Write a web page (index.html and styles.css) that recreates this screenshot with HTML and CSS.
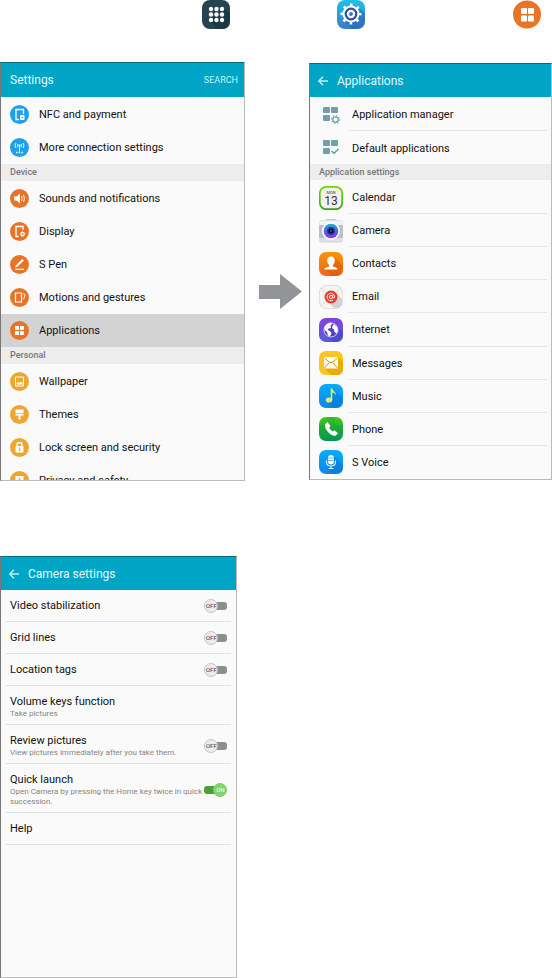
FILE: index.html
```html
<!DOCTYPE html>
<html lang="en">
<head>
  <meta charset="UTF-8">
  <meta name="viewport" content="width=device-width, initial-scale=1.0">
  <title>Camera settings</title>
  <link rel="stylesheet" href="styles.css">
</head>
<body>
  <div class="path">
    <svg class="path-icon" viewBox="0 0 28 29">
      <rect width="28" height="29" rx="8" fill="#234450"/>
      <path d="M7 20 L22 8 L28 14 V21 Q28 29 20 29 H15Z" fill="#1b3843"/>
      <g fill="#fff">
        <circle cx="9" cy="9" r="2.200"/><circle cx="14.500" cy="9" r="2.200"/><circle cx="20" cy="9" r="2.200"/>
        <circle cx="9" cy="14.500" r="2.200"/><circle cx="14.500" cy="14.500" r="2.200"/><circle cx="20" cy="14.500" r="2.200"/>
        <circle cx="9" cy="20" r="2.200"/><circle cx="14.500" cy="20" r="2.200"/><circle cx="20" cy="20" r="2.200"/>
      </g>
    </svg>
    <svg class="path-icon" viewBox="0 0 28 29">
      <defs><linearGradient id="gSet" x2="0" y2="1"><stop offset="0" stop-color="#1cc3e8"/><stop offset="1" stop-color="#4179c4"/></linearGradient></defs>
      <rect width="28" height="29" rx="8" fill="url(#gSet)"/>
      <path d="M7 20 L21 7 L28 14 V21 Q28 29 20 29 H15Z" fill="#1e62b4" opacity=".5"/>
      <circle cx="14" cy="14" r="8.500" fill="#fff"/>
      <circle cx="14" cy="14" r="9.300" fill="none" stroke="#fff" stroke-width="2.400" stroke-dasharray="2.600 4.704" stroke-dashoffset="1.300"/>
      <circle cx="14" cy="14" r="5.300" fill="#fff" stroke="#2c4fae" stroke-width="2.200"/>
      <circle cx="14" cy="14" r="1.900" fill="#2a78c8"/>
    </svg>
    <svg class="path-icon" viewBox="0 0 28 29">
      <circle cx="14" cy="14.500" r="14" fill="#e97428"/>
      <g fill="#fff"><rect x="8" y="8" width="6" height="6" rx="1"/><rect x="15" y="8" width="6" height="6" rx="1"/><rect x="8" y="15.500" width="6" height="6" rx="1"/><rect x="15" y="15.500" width="6" height="6" rx="1"/></g>
    </svg>
  </div>

  <div class="steps">
    <section class="screen settings">
      <header class="bar">
        <h2>Settings</h2>
        <button type="button" class="search">SEARCH</button>
      </header>
      <nav class="group">
        <a class="item" href="#nfc">
          <svg class="badge blue" viewBox="0 0 19 19"><path d="M9 14.500H6V4.500h7.500V9" fill="none" stroke="#fff" stroke-width="1.300"/><rect x="10" y="10" width="4.500" height="5" rx=".8" fill="#fff"/><path d="M11.500 12.500h1.500" stroke="#1fa0ec"/></svg>
          NFC and payment
        </a>
        <a class="item" href="#connections">
          <svg class="badge blue" viewBox="0 0 19 19"><g fill="none" stroke="#fff" stroke-width=".9"><path d="M6 5q-2 2.500 0 5M8 6q-1 1.500 0 3M13 5q2 2.500 0 5M11 6q1 1.500 0 3M9.500 7v6.500"/><path d="M6 14.500h7" stroke-width="1.300" stroke-dasharray="1.500 1.200"/></g><circle cx="9.500" cy="7.500" r="1" fill="#fff"/></svg>
          More connection settings
        </a>
      </nav>
      <h3 class="heading">Device</h3>
      <nav class="group">
        <a class="item" href="#sounds">
          <svg class="badge orange" viewBox="0 0 19 19"><path d="M4 7.500h2.500L10 4.500v10L6.500 11.500H4z" fill="#fff"/><path d="M11.500 7q1.500 2.500 0 5M13.500 6q2 3.500 0 7" fill="none" stroke="#fff" stroke-width=".9"/></svg>
          Sounds and notifications
        </a>
        <a class="item" href="#display">
          <svg class="badge orange" viewBox="0 0 19 19"><path d="M8.500 14.500H6V4.500h7V8" fill="none" stroke="#fff" stroke-width="1.300"/><circle cx="12.500" cy="12" r="2.200" fill="#fff" stroke="#fff" stroke-dasharray="1 .8"/><circle cx="12.800" cy="12" r=".9" fill="#e97428"/></svg>
          Display
        </a>
        <a class="item" href="#spen">
          <svg class="badge orange" viewBox="0 0 19 19"><path d="M5.500 14.300h8.500" stroke="#fff" stroke-width="1.300"/><path d="M5 12.500l.8-2L12.300 4l1.500 1.500-6.300 6.200z" fill="#fff"/></svg>
          S Pen
        </a>
        <a class="item" href="#motions">
          <svg class="badge orange" viewBox="0 0 19 19"><path d="M5.500 5h6v9h-6z" fill="none" stroke="#fff" stroke-width="1.200"/><path d="M13 5.500l2 1-.8 3.500-1.200 1.500" fill="none" stroke="#fff" stroke-width=".9"/></svg>
          Motions and gestures
        </a>
        <a class="item selected" href="#applications">
          <svg class="badge orange" viewBox="0 0 19 19"><g fill="#fff"><rect x="5" y="5" width="4" height="4" rx=".5"/><rect x="10" y="5" width="4" height="4" rx=".5"/><rect x="5" y="10" width="4" height="4" rx=".5"/><rect x="10" y="10" width="4" height="4" rx=".5"/></g></svg>
          Applications
        </a>
      </nav>
      <h3 class="heading">Personal</h3>
      <nav class="group">
        <a class="item" href="#wallpaper">
          <svg class="badge amber" viewBox="0 0 19 19"><path d="M5.500 5h8v9h-8z" fill="none" stroke="#fff"/><path d="M6.500 12.500v-1.300l1.700-1 1.300.8 1.500-1.500 1.500 1.500v1.500z" fill="#fff"/></svg>
          Wallpaper
        </a>
        <a class="item" href="#themes">
          <svg class="badge amber" viewBox="0 0 19 19"><path d="M5.500 4.500h8V8h-8zM5.500 8.800h8v1.700h-3v4h-2v-4h-3z" fill="#fff"/></svg>
          Themes
        </a>
        <a class="item" href="#lock">
          <svg class="badge amber" viewBox="0 0 19 19"><path d="M7 8.500V7a2.500 2.500 0 0 1 5 0v1.500" fill="none" stroke="#fff" stroke-width="1.300"/><rect x="5.500" y="8" width="8" height="6.500" rx=".8" fill="#fff"/><path d="M9.500 9.500v3.500" stroke="#eda632" stroke-width="1.400"/></svg>
          Lock screen and security
        </a>
        <a class="item" href="#privacy">
          <svg class="badge amber" viewBox="0 0 19 19"><path d="M5.500 5h8v6.500l-4 3-4-3z" fill="#fff"/><path d="M9.500 6.500v4" stroke="#eda632" stroke-width="1.400"/></svg>
          Privacy and safety
        </a>
      </nav>
    </section>

    <svg class="arrow" viewBox="0 0 43 35"><path d="M0 11h21V0l22 17.500L21 35V25H0z" fill="#939498"/></svg>

    <section class="screen applications">
      <header class="bar">
        <a class="back" href="#settings" aria-label="Back"><svg viewBox="0 0 10 10"><path d="M10 5H1M5 .8L.8 5 5 9.200" fill="none" stroke="#b5f4fb" stroke-width="1.400"/></svg></a>
        <h2>Applications</h2>
      </header>
      <nav class="group managers">
        <a class="app" href="#manager">
          <svg class="app-icon" viewBox="0 0 24 24"><g fill="#70a1a9"><rect x="4" y="4" width="7" height="6" rx="1"/><rect x="12" y="4" width="7" height="6" rx="1"/><rect x="4" y="12" width="7" height="6" rx="1"/></g><circle cx="16.500" cy="16.500" r="2.700" fill="none" stroke="#70a1a9" stroke-width="1.300"/><circle cx="16.500" cy="16.500" r="4" fill="none" stroke="#70a1a9" stroke-width="1.200" stroke-dasharray="1.200 1.942"/></svg>
          <span class="name">Application manager</span>
        </a>
        <a class="app" href="#defaults">
          <svg class="app-icon" viewBox="0 0 24 24"><g fill="#70a1a9"><rect x="4" y="4" width="7" height="6" rx="1"/><rect x="12" y="4" width="7" height="6" rx="1"/><rect x="4" y="12" width="7" height="6" rx="1"/></g><path d="M12.500 15l2.500 2.300 4.500-4.300" fill="none" stroke="#70a1a9" stroke-width="1.600"/></svg>
          <span class="name">Default applications</span>
        </a>
      </nav>
      <h3 class="heading">Application settings</h3>
      <nav class="group apps">
        <a class="app" href="#calendar">
          <svg class="app-icon" viewBox="0 0 24 24"><defs><linearGradient id="gCal" x2="0" y2="1"><stop offset="0" stop-color="#6ddb00"/><stop offset="1" stop-color="#35a51b"/></linearGradient></defs><rect x=".8" y=".8" width="22.400" height="22.400" rx="6.500" fill="#f2f3ef" stroke="url(#gCal)" stroke-width="1.700"/><text x="12" y="7.500" font-size="4" text-anchor="middle" fill="#333">MON</text><text x="12" y="18.500" font-size="12" text-anchor="middle" fill="#333">13</text></svg>
          <span class="name">Calendar</span>
        </a>
        <a class="app" href="#camera">
          <svg class="app-icon" viewBox="0 0 24 24"><defs><linearGradient id="gCam" x2="0" y2="1"><stop offset="0" stop-color="#12b5cf"/><stop offset=".5" stop-color="#4867e8"/><stop offset="1" stop-color="#a12bf1"/></linearGradient></defs><rect x="7" y="0" width="10" height="3" rx="1" fill="#c7c7cb"/><rect x=".5" y="1.500" width="23" height="22" rx="2" fill="#f2f2f5" stroke="#dcdce0" stroke-width=".7"/><rect y="6" width="24" height="13" fill="#bdbdcb"/><rect x=".5" y="19" width="23" height="4" fill="#dedee9"/><circle cx="12" cy="12" r="9" fill="#fff"/><circle cx="12" cy="12" r="7.300" fill="url(#gCam)"/><circle cx="12" cy="12" r="4" fill="#33339c"/><circle cx="12" cy="12" r="2.500" fill="#090e3b"/><circle cx="12" cy="12" r=".8" fill="#39a6c9"/></svg>
          <span class="name">Camera</span>
        </a>
        <a class="app" href="#contacts">
          <svg class="app-icon" viewBox="0 0 24 24"><defs><linearGradient id="gCon" x2="0" y2="1"><stop offset="0" stop-color="#f99408"/><stop offset="1" stop-color="#eb6621"/></linearGradient></defs><rect width="24" height="24" rx="7" fill="url(#gCon)"/><path d="M15 5l9 9v4q0 6-6 6h-5l-7-7z" fill="#d75a0d" opacity=".5"/><path d="M12 4.500c2.700 0 4 2 3.800 4.500-.2 2-1 3-1.800 4v1.500c1.500.8 4.500.7 4.500 3H5.500c0-2.300 3-2.200 4.500-3V13c-.8-1-1.600-2-1.800-4C8 6.500 9.300 4.500 12 4.500z" fill="#fff"/></svg>
          <span class="name">Contacts</span>
        </a>
        <a class="app" href="#email">
          <svg class="app-icon" viewBox="0 0 24 24"><rect x=".4" y=".4" width="23.200" height="23.200" rx="7" fill="#f4f4f1" stroke="#d6d6d2" stroke-width=".8"/><path d="M2 3l10 9L22 3M2 21l6-6M22 21l-6-6" fill="none" stroke="#d1d1ce" stroke-width=".8"/><path d="M17 8l6 6v4q0 5-5 5h-3l-7-7z" fill="#d3d3d0"/><circle cx="12" cy="12" r="6.500" fill="#ec3c28"/><circle cx="12" cy="12" r="1.600" fill="none" stroke="#fff"/><path d="M13.700 10v2.500q1.500 1.500 2-.5a3.800 3.800 0 1 0-1.700 3.200" fill="none" stroke="#fff" stroke-width=".9"/></svg>
          <span class="name">Email</span>
        </a>
        <a class="app" href="#internet">
          <svg class="app-icon" viewBox="0 0 24 24"><defs><linearGradient id="gInt" x2="0" y2="1"><stop offset="0" stop-color="#8440dc"/><stop offset="1" stop-color="#5361da"/></linearGradient></defs><rect width="24" height="24" rx="7" fill="url(#gInt)"/><path d="M17 7l7 7v4q0 6-6 6h-4l-7-7z" fill="#4636b6" opacity=".5"/><circle cx="12" cy="12" r="7" fill="#5240c9" stroke="#f4f1ff" stroke-width=".8"/><path d="M5.500 9l2.500-3 4-1.500 1 1.500-1.500 2 .5 2-2.500.5-1 1.500 2.500 1 1.500 2-1.500 3.500-2-1L8 14 5.500 12zM15 6l3 3 .8 3-1.300 3.500L15.500 14l-.5-2.500-2-1.500.5-2z" fill="#fff"/></svg>
          <span class="name">Internet</span>
        </a>
        <a class="app" href="#messages">
          <svg class="app-icon" viewBox="0 0 24 24"><rect width="24" height="24" rx="7" fill="#fdc51e"/><path d="M19 6l5 5v7q0 6-6 6h-6l-7-7z" fill="#e5a500" opacity=".8"/><rect x="5" y="6" width="14" height="11.500" rx=".5" fill="#fffdf3"/><path d="M5.500 7l4.500 4q2 1.500 4 0l4.500-4M5.500 17l4.500-5M18.500 17L14 12" fill="none" stroke="#cc9716"/></svg>
          <span class="name">Messages</span>
        </a>
        <a class="app" href="#music">
          <svg class="app-icon" viewBox="0 0 24 24"><defs><linearGradient id="gBlue" x2="0" y2="1"><stop offset="0" stop-color="#04adfa"/><stop offset="1" stop-color="#1185e8"/></linearGradient></defs><rect width="24" height="24" rx="7" fill="url(#gBlue)"/><path d="M14 5l10 9v4q0 6-6 6h-4l-6-6z" fill="#0875d0" opacity=".5"/><ellipse cx="10" cy="16" rx="3.200" ry="2.600" fill="#d8f36b"/><path d="M11.700 16V4.500h1.600c.2 2.500 4 3 3.700 7-.8-2-2-2.700-3.700-3V16z" fill="#d8f36b"/></svg>
          <span class="name">Music</span>
        </a>
        <a class="app" href="#phone">
          <svg class="app-icon" viewBox="0 0 24 24"><defs><linearGradient id="gPho" x2="0" y2="1"><stop offset="0" stop-color="#43c91b"/><stop offset="1" stop-color="#009654"/></linearGradient></defs><rect width="24" height="24" rx="7" fill="url(#gPho)"/><path d="M8 0h8v8h8v8h-8v8H8v-8H0V8h8z" fill="#068b40" opacity=".18"/><path d="M6 7.500L8.500 5l3 4-1.500 2 3.500 3.500 2-1.300 3.500 3-2.500 2.500C12 19.500 5.500 13 6 7.500z" fill="#fff"/></svg>
          <span class="name">Phone</span>
        </a>
        <a class="app" href="#svoice">
          <svg class="app-icon" viewBox="0 0 24 24"><rect width="24" height="24" rx="7" fill="url(#gBlue)"/><path d="M15 6l9 9v3q0 6-6 6h-5l-5-6z" fill="#0875d0" opacity=".5"/><rect x="9" y="5" width="6" height="9.500" rx="3" fill="#f1faff"/><path d="M9 8h6M9 10.500h6" stroke="#53a9d8" stroke-width=".8"/><path d="M7.500 10.500v1.500q0 4 4.500 4t4.500-4v-1.500M12 16v2.500M9.500 18.500h5" fill="none" stroke="#e3f5ff" stroke-width="1.100"/></svg>
          <span class="name">S Voice</span>
        </a>
      </nav>
    </section>
  </div>

  <section class="screen camera">
    <header class="bar">
      <a class="back" href="#applications" aria-label="Back"><svg viewBox="0 0 10 10"><path d="M10 5H1M5 .8L.8 5 5 9.200" fill="none" stroke="#b5f4fb" stroke-width="1.400"/></svg></a>
      <h2>Camera settings</h2>
    </header>
    <label class="option">
      <span class="text">Video stabilization</span>
      <span class="switch"><input type="checkbox"><span class="knob">OFF</span></span>
    </label>
    <label class="option">
      <span class="text">Grid lines</span>
      <span class="switch"><input type="checkbox"><span class="knob">OFF</span></span>
    </label>
    <label class="option">
      <span class="text">Location tags</span>
      <span class="switch"><input type="checkbox"><span class="knob">OFF</span></span>
    </label>
    <a class="option detailed" href="#volume">
      <span class="text">Volume keys function<small>Take pictures</small></span>
    </a>
    <label class="option detailed">
      <span class="text">Review pictures<small>View pictures immediately after you take them.</small></span>
      <span class="switch"><input type="checkbox"><span class="knob">OFF</span></span>
    </label>
    <label class="option detailed">
      <span class="text">Quick launch<small>Open Camera by pressing the Home key twice in quick succession.</small></span>
      <span class="switch on"><input type="checkbox" checked><span class="knob">ON</span></span>
    </label>
    <a class="option" href="#help">
      <span class="text">Help</span>
    </a>
  </section>
</body>
</html>
```
FILE: styles.css
```css
* {
  box-sizing: border-box;
}

body {
  margin: 0;
  background: #fff;
  color: #111;
  font-family: Roboto, "Liberation Sans", sans-serif;
  font-size: 11px;
  line-height: 14px;
}

a {
  color: inherit;
  text-decoration: none;
}

svg {
  display: block;
}

h2, h3 {
  margin: 0;
}

/* icon row above the screens */
.path {
  display: grid;
  grid-template-columns: 135fr 176fr 39fr;
  padding-left: 36.6%;
  margin-bottom: 33px;
}

.path-icon {
  width: 28px;
  height: 29px;
}

.steps {
  display: grid;
  grid-template-columns: 245fr 64fr 243fr;
  align-items: center;
  margin-bottom: 75px;
}

.arrow {
  width: 43px;
  margin: 40px auto 0 14px;
}

.screen {
  display: flex;
  flex-direction: column;
  overflow: hidden;
  background: #fafafa;
  border: 1px solid #bbb;
  border-left-color: #777;
  border-top-color: #046e83;
}

.settings {
  height: 419px;
}

.applications {
  min-height: 417px;
}

.camera {
  width: 43%;
  min-height: 422px;
}

.bar {
  display: flex;
  flex: none;
  align-items: center;
  height: 34px;
  padding: 0 6px 0 9px;
  background: #00a5c6;
  color: #e2fafd;
}

.applications .bar, .camera .bar {
  height: 33px;
  padding-left: 8px;
}

.bar h2 {
  font-size: 12px;
  font-weight: 400;
}

.back {
  width: 10px;
  margin-right: 9px;
}

.search {
  margin-left: auto;
  padding: 0;
  border: 0;
  background: none;
  color: #c8f4fa;
  font: inherit;
  font-size: 9px;
}

.heading {
  flex: none;
  padding-left: 9px;
  background: #ededed;
  color: #777;
  font-size: 9px;
  font-weight: 500;
  line-height: 17px;
}

.applications .heading {
  line-height: 16px;
}

.group {
  flex: none;
  padding-top: 1px;
}

.item {
  display: flex;
  align-items: center;
  gap: 10px;
  height: 33px;
  padding-left: 9px;
}

.item.selected {
  background: #d3d3d3;
}

.badge {
  width: 19px;
  height: 19px;
  border-radius: 50%;
}

.blue {
  background: #1fa0ec;
}

.orange {
  background: #e97428;
}

.amber {
  background: #eda632;
}

/* applications list */
.managers, .apps {
  display: flex;
  flex-direction: column;
}

.apps {
  flex: 1;
}

.app {
  display: flex;
  flex: 1 0 33px;
  align-items: center;
  gap: 5px;
  padding: 0 4px 0 9px;
}

.app-icon {
  flex: none;
  width: 24px;
  height: 24px;
}

.name {
  display: flex;
  flex: 1;
  align-self: stretch;
  align-items: center;
  padding: 2px 0 0 4px;
  border-bottom: 1px solid #e6e6e6;
}

.app:last-child .name {
  border-bottom: 0;
}

/* camera settings */
.option {
  display: flex;
  align-items: center;
  justify-content: space-between;
  min-height: 32px;
  margin: 0 5px;
  padding: 5px 4px;
  border-bottom: 1px solid #e2e2e2;
}

.option.detailed {
  padding: 9px 4px 5px;
}

.option small {
  display: block;
  color: #858585;
  font-size: 8px;
  line-height: 10px;
}

.switch {
  position: relative;
  flex: none;
  width: 23px;
  height: 14px;
}

.switch input {
  display: block;
  width: 17px;
  height: 8px;
  margin: 3px 0 0 6px;
  border-radius: 3px;
  background: #8e8e8e;
  appearance: none;
}

.knob {
  position: absolute;
  top: 0;
  left: 0;
  width: 14px;
  height: 14px;
  border: 1px solid #c4c4c4;
  border-radius: 50%;
  background: #ececec;
  color: #444;
  font-size: 6px;
  line-height: 12px;
  text-align: center;
}

.switch.on input {
  margin-left: 0;
  background: #4c9f3c;
}

.switch.on .knob {
  right: 0;
  left: auto;
  border-color: #7ccb66;
  background: #83d56c;
  color: #fff;
}
```
